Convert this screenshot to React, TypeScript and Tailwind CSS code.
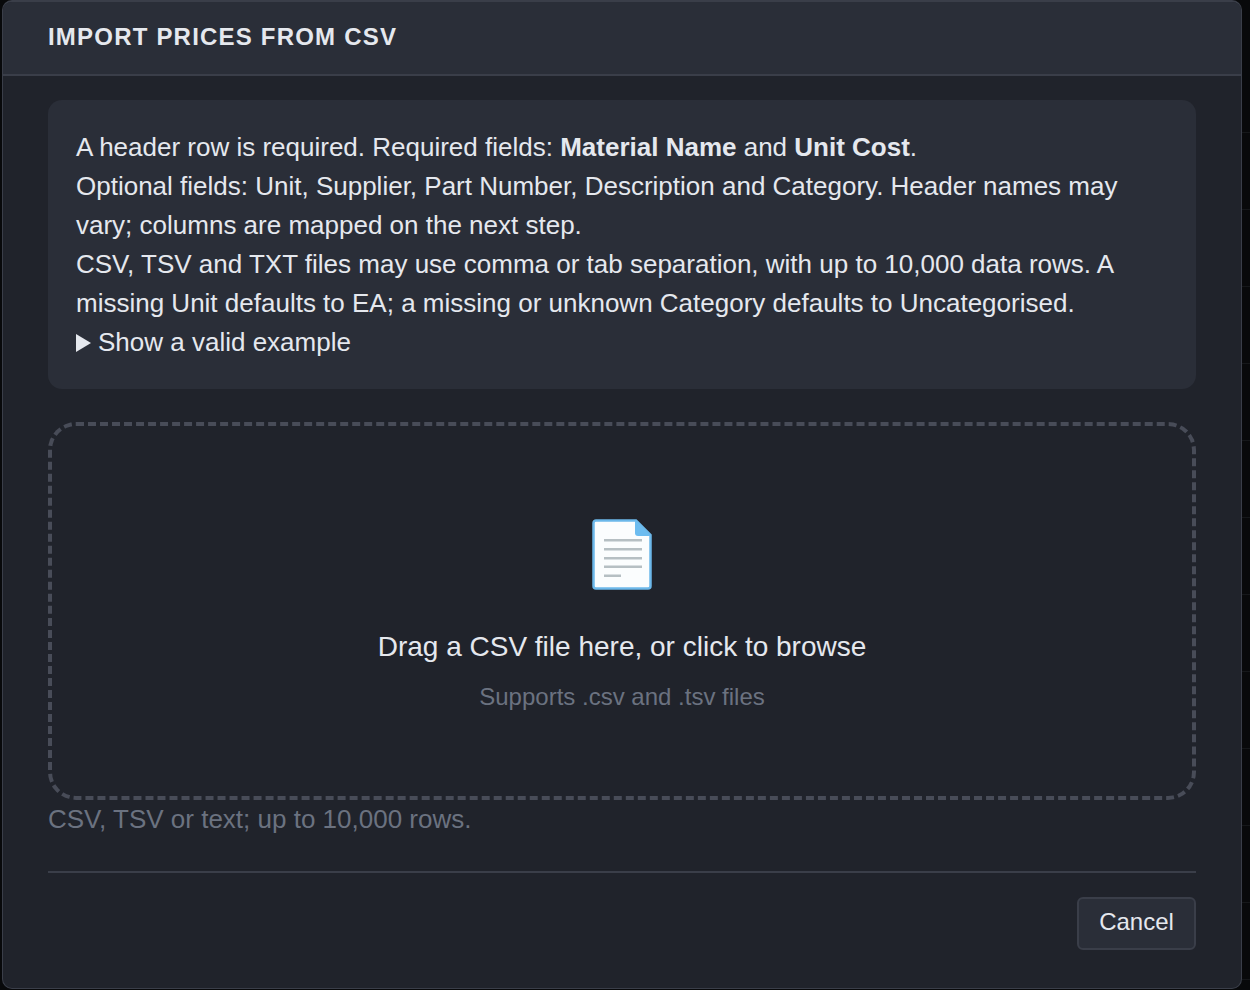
const rows = [0, 1, 2, 3, 4, 5, 6, 7, 8, 9, 10, 11]

function FileIcon() {
  return (
    <svg width="60" height="71" viewBox="0 0 60 71" className="block -ml-px">
      <path d="M4 1.500H44L58.500 16V67a2.500 2.500 0 0 1-2.500 2.500H4A2.500 2.500 0 0 1 1.500 67V4A2.500 2.500 0 0 1 4 1.500Z" fill="#fbfdfe" stroke="#6cb8ea" strokeWidth="2.500" />
      <path d="M43 1.500L58.500 17H46a3 3 0 0 1-3-3Z" fill="#6cbcf0" />
      <g fill="#b6bfc3">
        <rect x="12" y="20" width="38" height="2.500" />
        <rect x="12" y="29" width="38" height="2.500" />
        <rect x="12" y="38" width="38" height="2.500" />
        <rect x="12" y="46.500" width="38" height="2.500" />
        <rect x="12" y="55.500" width="17" height="2.500" />
      </g>
    </svg>
  )
}

export default function App() {
  return (
    <div className="h-[990px] bg-[#08090b] pl-[2px] flex font-['Liberation_Sans',Arial,sans-serif] overflow-hidden">
      <div className="h-[989px] w-[1240px] shrink-0 bg-[#20232b] border border-[#3a3e49] border-t-2 rounded-[10px] overflow-hidden">
        {/* Header */}
        <div className="h-[74px] bg-[#2a2e38] border-b-2 border-[#3a3e49] flex items-center px-[45px] pb-[2px]">
          <h2 className="text-[24px] font-bold tracking-[1.2px] text-[#e5e8ee]">IMPORT PRICES FROM CSV</h2>
        </div>

        <div className="px-[45px] pt-[24px]">
          {/* Info */}
          <div className="bg-[#2a2e38] rounded-[14px] px-[28px] pt-[28px] pb-[27px] text-[26px] leading-[39px] text-[#e5e8ee]">
            <p>A header row is required. Required fields: <strong>Material Name</strong> and <strong>Unit Cost</strong>.</p>
            <p>Optional fields: Unit, Supplier, Part Number, Description and Category. Header names may vary; columns are mapped on the next step.</p>
            <p>CSV, TSV and TXT files may use comma or tab separation, with up to 10,000 data rows. A missing Unit defaults to EA; a missing or unknown Category defaults to Uncategorised.</p>
            <div className="flex items-center gap-[7px]">
              <span className="w-0 h-0 border-y-[9px] border-y-transparent border-l-[15px] border-l-[#e5e8ee]" />
              <span>Show a valid example</span>
            </div>
          </div>

          {/* Drop zone */}
          <div className="mt-[33px] h-[378px] border-[4px] border-dashed border-[#484c58] rounded-[28px] flex flex-col items-center pt-[93px]">
            <FileIcon />
            <p className="mt-[36px] text-[28px] leading-[42px] text-[#e5e8ee]">Drag a CSV file here, or click to browse</p>
            <p className="mt-[11px] text-[24px] leading-[36px] text-[#6b7280]">Supports .csv and .tsv files</p>
          </div>

          <p className="text-[26px] leading-[39px] text-[#6b7280]">CSV, TSV or text; up to 10,000 rows.</p>

          {/* Footer */}
          <div className="mt-[32px] border-t-2 border-[#3a3e49] pt-[24px] flex justify-end">
            <button className="h-[53px] w-[119px] rounded-[6px] bg-[#2a2e38] border-2 border-[#3a3e49] pb-[4px] text-[24px] text-[#e5e8ee]">Cancel</button>
          </div>
        </div>
      </div>

      {/* Table rows showing behind the dialog */}
      <div className="flex-1 pt-[57px]">
        {rows.map((row) => (
          <div key={row} className="h-[77px] -mt-px mb-px border-b border-[#15171a]" />
        ))}
      </div>
    </div>
  )
}
